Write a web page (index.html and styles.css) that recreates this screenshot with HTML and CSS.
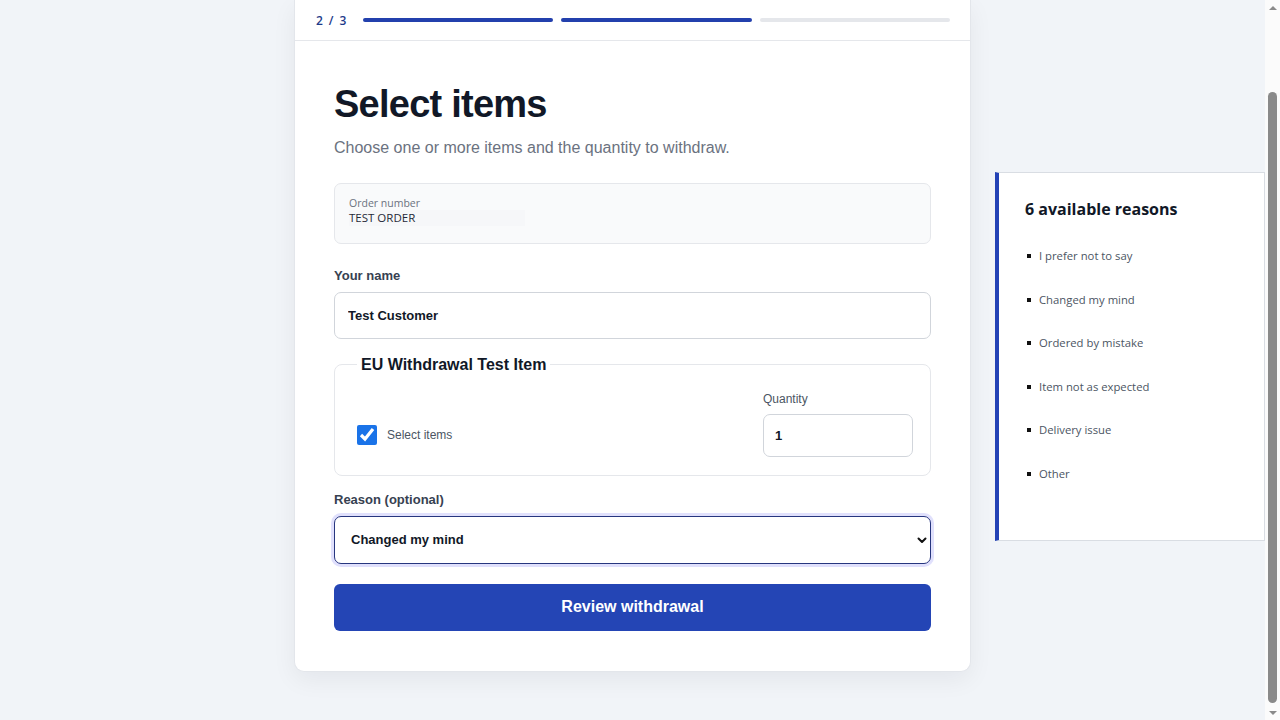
FILE: index.html
```html
<!DOCTYPE html>
<html lang="en">
<head>
  <meta charset="UTF-8" />
  <title>Withdrawal - Select items</title>
  <link rel="stylesheet" href="styles.css">
</head>
<body>
  <div class="page">
    <div class="card">
      <div class="steps">
        <span class="step-count">2 / 3</span>
        <div class="bars">
          <span class="bar done"></span>
          <span class="bar done"></span>
          <span class="bar"></span>
        </div>
      </div>

      <div class="content">
        <h1>Select items</h1>
        <p class="lead">Choose one or more items and the quantity to withdraw.</p>

        <div class="order-box">
          <span class="order-label">Order number</span>
          <span class="order-value">TEST ORDER</span>
        </div>

        <label class="field-label" for="name">Your name</label>
        <input class="text-input" id="name" type="text" value="Test Customer">

        <fieldset class="item">
          <legend>EU Withdrawal Test Item</legend>
          <div class="item-row">
            <label class="check">
              <input type="checkbox" checked>
              <span>Select items</span>
            </label>
            <div class="qty">
              <label for="qty">Quantity</label>
              <input class="qty-input" id="qty" type="text" value="1">
            </div>
          </div>
        </fieldset>

        <label class="field-label reason-label" for="reason">Reason (optional)</label>
        <div class="select-wrap">
          <select class="select" id="reason">
            <option>I prefer not to say</option>
            <option selected>Changed my mind</option>
            <option>Ordered by mistake</option>
            <option>Item not as expected</option>
            <option>Delivery issue</option>
            <option>Other</option>
          </select>
          <svg class="chevron" width="12" height="12" viewBox="0 0 12 12">
            <path d="M2.5 4.5 L6 8 L9.5 4.5" fill="none" stroke="#111" stroke-width="2" stroke-linecap="round" stroke-linejoin="round"/>
          </svg>
        </div>

        <button class="submit" type="button">Review withdrawal</button>
      </div>
    </div>

    <aside class="reasons">
      <h2>6 available reasons</h2>
      <ul>
        <li>I prefer not to say</li>
        <li>Changed my mind</li>
        <li>Ordered by mistake</li>
        <li>Item not as expected</li>
        <li>Delivery issue</li>
        <li>Other</li>
      </ul>
    </aside>
  </div>

  <!-- window scrollbar as seen in the capture -->
  <div class="scrollbar">
    <span class="arrow up"></span>
    <span class="thumb"></span>
    <span class="arrow down"></span>
  </div>
</body>
</html>
```

FILE: styles.css
```css
html {
  background: #f1f4f8;
}

body {
  font-family: 'Liberation Sans', Arial, sans-serif;
  background: #f1f4f8;
  margin: 0;
  color: #111827;
}

.page {
  padding: 0 15px 50px 0;
}

/* the top of the card sits above the visible area */
.card {
  width: 677px;
  margin: 0 auto;
  box-sizing: border-box;
  background: white;
  border: 1px solid #e3e6eb;
  border-top: none;
  border-radius: 0 0 10px 10px;
  box-shadow: 0 8px 24px rgba(15, 23, 42, 0.06);
}

.steps {
  display: flex;
  align-items: center;
  gap: 15px;
  height: 40px;
  padding: 0 20px 0 21px;
  background: white;
  border-bottom: 1px solid #e5e7eb;
}

.step-count {
  font-family: 'Open Sans', sans-serif;
  font-size: 12px;
  font-weight: 600;
  letter-spacing: 0.12em;
  color: #1e3a8a;
  white-space: nowrap;
}

.bars {
  flex: 1;
  display: flex;
  gap: 8px;
}

.bar {
  flex: 1;
  height: 4px;
  border-radius: 2px;
  background: #e5e7eb;
}

.bar.done {
  background: #2340ad;
}

.content {
  padding: 41px 39px 40px;
}

h1 {
  margin: 0;
  font-size: 38px;
  line-height: 1.2;
  letter-spacing: -0.02em;
  color: #111827;
}

.lead {
  margin: 8px 0 0;
  font-size: 16px;
  line-height: 24px;
  color: #6b7280;
}

.order-box {
  display: flex;
  flex-direction: column;
  margin-top: 23px;
  padding: 12px 14px 17px;
  background: #f9fafb;
  border: 1px solid #e5e7eb;
  border-radius: 7px;
  font-family: 'Open Sans', sans-serif;
}

.order-label {
  font-size: 10.5px;
  line-height: 14px;
  color: #6b7280;
}

.order-value {
  width: 176px;
  font-size: 11.5px;
  line-height: 16px;
  color: #1f2937;
  background: #f6f7f9;
}

.field-label {
  display: block;
  margin-top: 22px;
  margin-bottom: 6px;
  font-size: 13px;
  line-height: 20px;
  font-weight: bold;
  color: #374151;
}

.reason-label {
  margin-top: 14px;
}

.text-input {
  display: block;
  width: 100%;
  height: 47px;
  box-sizing: border-box;
  padding: 0 13px;
  border: 1px solid #d1d5db;
  border-radius: 7px;
  font-family: inherit;
  font-size: 13px;
  font-weight: bold;
  color: #111827;
  background: white;
}

.item {
  margin: 16px 0 0;
  padding: 16px 17px 18px 22px;
  border: 1px solid #e5e7eb;
  border-radius: 8px;
}

.item legend {
  padding: 0 4px;
  font-size: 16px;
  line-height: 20px;
  font-weight: bold;
  color: #111827;
}

.item-row {
  display: flex;
  justify-content: space-between;
  align-items: flex-end;
}

.check {
  display: flex;
  align-items: center;
  gap: 10px;
  height: 43px;
  font-size: 12px;
  color: #4b5563;
}

.check input {
  width: 20px;
  height: 20px;
  margin: 0;
  accent-color: #1a73e8;
}

.qty {
  display: flex;
  flex-direction: column;
  gap: 7px;
  width: 150px;
}

.qty label {
  font-size: 12px;
  line-height: 16px;
  color: #4b5563;
}

.qty-input {
  width: 100%;
  height: 43px;
  box-sizing: border-box;
  padding: 0 11px;
  border: 1px solid #d1d5db;
  border-radius: 7px;
  font-family: inherit;
  font-size: 13px;
  font-weight: bold;
  color: #111827;
}

.select-wrap {
  position: relative;
}

.select {
  display: block;
  width: 100%;
  height: 48px;
  box-sizing: border-box;
  padding: 0 16px;
  appearance: none;
  border: 1.5px solid #27367f;
  border-radius: 7px;
  box-shadow: 0 0 0 3px rgba(99, 102, 241, 0.2);
  background: white;
  font-family: inherit;
  font-size: 13px;
  font-weight: bold;
  color: #111827;
}

.chevron {
  position: absolute;
  right: 3px;
  top: 18px;
}

.submit {
  display: block;
  width: 100%;
  height: 47px;
  margin-top: 20px;
  border: none;
  border-radius: 6px;
  background: #2445b5;
  color: white;
  font-family: inherit;
  font-size: 16px;
  font-weight: bold;
}

/* side panel */
.reasons {
  position: fixed;
  top: 172px;
  right: 15px;
  width: 270px;
  height: 369px;
  box-sizing: border-box;
  padding: 25px 20px 0 26px;
  background: white;
  border: 1px solid #d9dde3;
  border-left: 4px solid #2443b6;
  font-family: 'Open Sans', sans-serif;
}

.reasons h2 {
  margin: 0;
  font-size: 16px;
  line-height: 22px;
  font-weight: bold;
  color: #111827;
}

.reasons ul {
  display: flex;
  flex-direction: column;
  gap: 27.5px;
  margin: 28px 0 0;
  padding: 0;
  list-style: none;
}

.reasons li {
  display: flex;
  align-items: center;
  gap: 8px;
  padding-left: 2px;
  font-size: 11.3px;
  line-height: 16px;
  color: #4b5563;
}

.reasons li::before {
  content: "";
  width: 4px;
  height: 4px;
  background: #111;
}

/* scrollbar */
.scrollbar {
  position: fixed;
  top: 0;
  right: 0;
  bottom: 0;
  width: 15px;
  display: flex;
  flex-direction: column;
  align-items: center;
  background: #fbfbfb;
}

.arrow {
  width: 0;
  height: 0;
  border-left: 4px solid transparent;
  border-right: 4px solid transparent;
}

.arrow.up {
  margin: 6px 0 0;
  border-bottom: 4px solid #8a8a8a;
}

.arrow.down {
  margin: 0 0 5px;
  border-top: 4px solid #8a8a8a;
}

.thumb {
  flex: 1;
  width: 9px;
  margin: 82px 0 8px;
  border-radius: 5px;
  background: #8a8a8a;
}
```
